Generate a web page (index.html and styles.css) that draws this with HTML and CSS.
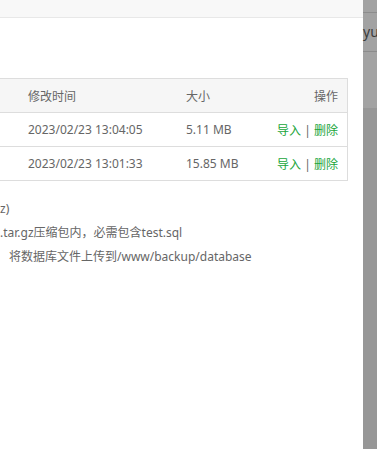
FILE: index.html
```html
<!DOCTYPE html>
<html>

<head>
    <meta charset="UTF-8">
    <title>导入数据库</title>
    <link rel="stylesheet" href="styles.css">
</head>

<body>
    <div id="page">
        <div id="layer">
            <div class="layer-title"></div>
            <div class="layer-content">
                <div class="table-wrap">
                    <table class="file-table">
                        <thead>
                            <tr>
                                <th class="col-time">修改时间</th>
                                <th class="col-size">大小</th>
                                <th class="col-op">操作</th>
                            </tr>
                        </thead>
                        <tbody>
                            <tr>
                                <td class="col-time">2023/02/23 13:04:05</td>
                                <td class="col-size">5.11 MB</td>
                                <td class="col-op"><a class="btlink">导入</a> | <a class="btlink">删除</a></td>
                            </tr>
                            <tr>
                                <td class="col-time">2023/02/23 13:01:33</td>
                                <td class="col-size">15.85 MB</td>
                                <td class="col-op"><a class="btlink">导入</a> | <a class="btlink">删除</a></td>
                            </tr>
                        </tbody>
                    </table>
                </div>
                <ul class="help">
                    <li>z)</li>
                    <li>.tar.gz压缩包内，必需包含test.sql</li>
                    <li class="indent">将数据库文件上传到/www/backup/database</li>
                </ul>
            </div>
        </div>
        <div id="behind">
            <div class="bg-top"></div>
            <div class="bg-user">yu</div>
            <div class="bg-bar"></div>
            <div class="bg-rest"></div>
        </div>
    </div>
</body>

</html>
```

FILE: styles.css
```css
body {
    margin: 0;
    font-family: "Noto Sans", "Noto Sans CJK SC", sans-serif;
    font-size: 12px;
    color: #666;
}

#page {
    display: flex;
    height: 449px;
    overflow: hidden;
}

#layer {
    width: 363px;
    flex: none;
    background-color: #fff;
}

.layer-title {
    height: 17px;
    background-color: #f8f8f8;
    border-bottom: 1px solid #e8e8e8;
}

.layer-content {
    padding-top: 60px;
}

.table-wrap {
    width: 348px;
    overflow: hidden;
}

.file-table {
    width: 349px;
    margin-left: -1px;
    border-collapse: collapse;
    border: 1px solid #ddd;
}

.file-table th,
.file-table td {
    height: 33px;
    padding: 0;
    font-weight: normal;
    text-align: left;
    border-bottom: 1px solid #ddd;
}

.file-table th {
    background-color: #f6f6f6;
}

.col-time {
    width: 158px;
    padding-left: 28px !important;
}

.col-size {
    width: 86px;
}

.col-op {
    text-align: right !important;
    padding-right: 9px !important;
}

.btlink {
    color: #20a53a;
}

.help {
    list-style-type: none;
    margin: 16px 0 0;
    padding: 0;
    line-height: 24px;
}

.help .indent {
    padding-left: 9px;
}

#behind {
    flex: 1;
    background-color: #979797;
    color: #3c3c3c;
    font-size: 14px;
}

.bg-top {
    height: 12px;
    background-color: #a2a2a2;
    border-bottom: 1px solid #8c8c8c;
}

.bg-user {
    height: 38px;
    line-height: 38px;
    background-color: #a2a2a2;
    border-bottom: 1px solid #8c8c8c;
    white-space: nowrap;
}

.bg-bar {
    height: 56px;
    background-color: #a3a3a3;
}
```
